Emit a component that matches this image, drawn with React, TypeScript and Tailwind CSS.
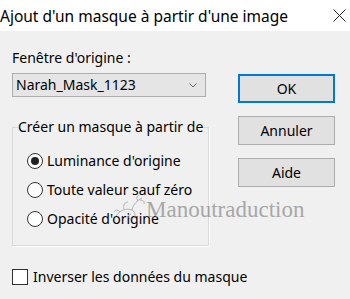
import React from "react";

const options = ["Luminance d'origine", "Toute valeur sauf zéro", "Opacité d'origine"];

function Radio({ checked }: { checked?: boolean }) {
  return (
    <span className="flex h-4 w-4 shrink-0 items-center justify-center rounded-full border border-[#333] bg-white">
      {checked && <span className="h-2 w-2 rounded-full bg-[#222]" />}
    </span>
  );
}

export default function App() {
  return (
    <div className="relative h-[299px] w-[350px] overflow-hidden bg-[#f0f0f0] font-['Noto_Sans',sans-serif] text-[14px] leading-[20px] text-black">
      {/* title bar */}
      <div className="flex h-[31px] items-center justify-between bg-white pr-[3px]">
        <span className="text-[15.5px]">Ajout d'un masque à partir d'une image</span>
        <svg width="13" height="13" viewBox="0 0 13 13" className="mr-[1px]">
          <path d="M0.5 0.5 L12.5 12.5 M12.5 0.5 L0.5 12.5" stroke="#222" strokeWidth="1" />
        </svg>
      </div>

      <div className="flex pl-3 pt-[17px]">
        <div className="w-[194px]">
          <div className="h-5">Fenêtre d'origine :</div>
          <div className="mt-[5px] flex h-6 items-center justify-between border border-[#adadad] bg-[#e5e5e5] pl-[3px] pr-[8px]">
            <span>Narah_Mask_1123</span>
            <svg width="8" height="5" viewBox="0 0 8 5">
              <path d="M0.5 0.5 L4 4 L7.5 0.5" stroke="#666" strokeWidth="1" fill="none" />
            </svg>
          </div>

          <fieldset className="mt-5 border border-[#d9d9d9] px-[5px] pb-3 shadow-[1px_1px_0_#fff]">
            <legend className="whitespace-nowrap px-0">Créer un masque à partir de</legend>
            <div className="pt-[9px]">
              {options.map((o, i) => (
                <div key={o} className="flex h-[29px] items-center gap-1 pl-[9px]">
                  <Radio checked={i === 0} />
                  <span className="whitespace-nowrap">{o}</span>
                </div>
              ))}
            </div>
          </fieldset>
        </div>

        <div className="ml-8 flex w-[97px] flex-col gap-[13px] pt-[26px]">
          <button className="h-[29px] border-2 border-[#0078d7] bg-[#e1e1e1]">OK</button>
          <button className="h-[29px] border border-[#adadad] bg-[#e1e1e1]">Annuler</button>
          <button className="h-[29px] border border-[#adadad] bg-[#e1e1e1]">Aide</button>
        </div>
      </div>

      <label className="ml-3 mt-[21px] flex h-5 w-[235px] items-center gap-[5px] overflow-hidden whitespace-nowrap">
        <span className="h-4 w-4 shrink-0 border border-[#333] bg-white" />
        <span>Inverser les données du masque</span>
      </label>

      {/* watermark */}
      <div className="pointer-events-none absolute left-[112px] top-[194px] flex items-end opacity-60">
        <svg width="34" height="30" viewBox="0 0 34 30" fill="none" stroke="#8a8a8a" strokeWidth="1">
          <path d="M4 22 C8 16 14 14 20 16 C24 18 24 24 20 25 C16 26 15 21 19 20" />
          <path d="M20 16 C21 10 26 6 30 4 M26 7 C24 4 25 2 27 1 M28 6 C31 6 33 8 32 10" />
          <path d="M12 15 C11 11 13 8 16 8 M8 18 C5 15 3 16 2 18" />
        </svg>
        <span className="font-['Liberation_Serif',serif] text-[23px] leading-[28px] text-[#777]">Manoutraduction</span>
      </div>
    </div>
  );
}
